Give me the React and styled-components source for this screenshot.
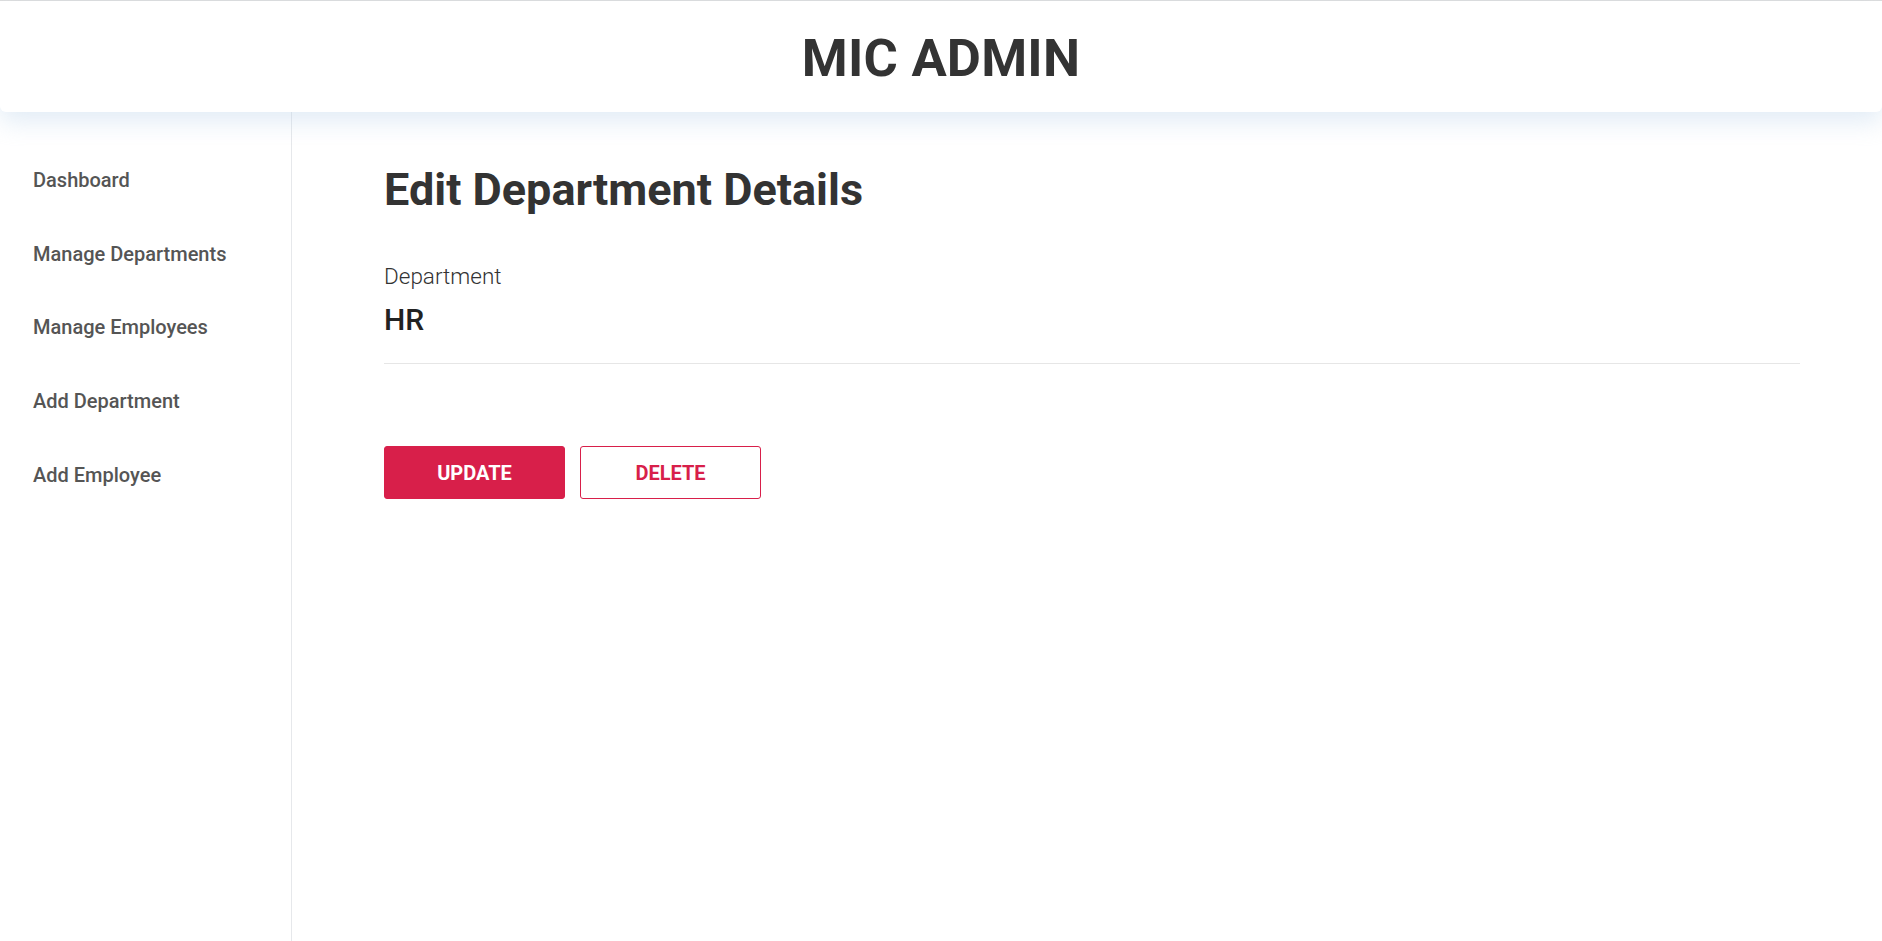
import React from "react";
import styled, { createGlobalStyle } from "styled-components";

const Global = createGlobalStyle`
  * { box-sizing: border-box; }
  html, body { margin: 0; padding: 0; background: #fff; }
  body { font-family: Roboto, "Noto Sans", Arial, sans-serif; color: #333; }
`;

const Page = styled.div`
  display: flex;
  flex-direction: column;
  min-height: 941px;
  border-top: 1px solid #dcdcdc;
`;

const Header = styled.header`
  position: relative;
  z-index: 2;
  height: 111px;
  padding-top: 3px;
  display: flex;
  align-items: center;
  justify-content: center;
  background: #fff;
  border-radius: 0 0 6px 6px;
  box-shadow: 0 10px 24px rgba(190, 212, 235, 0.45);
`;

const Title = styled.h1`
  margin: 0;
  font-size: 52.5px;
  font-weight: 700;
  color: #333;
  letter-spacing: 0.2px;
`;

const Body = styled.div`
  flex: 1;
  display: flex;
`;

const Sidebar = styled.nav`
  width: 292px;
  flex-shrink: 0;
  border-right: 1px solid #e6e8eb;
  padding-top: 31px;
  display: flex;
  flex-direction: column;
`;

const NavItem = styled.a`
  height: 73.8px;
  display: flex;
  align-items: center;
  padding-left: 33px;
  font-size: 20px;
  font-weight: 500;
  color: #555;
  text-decoration: none;
  cursor: pointer;
`;

const Main = styled.main`
  flex: 1;
  padding: 50px 82px 0 92px;
`;

const Heading = styled.h2`
  margin: 0;
  font-size: 45px;
  line-height: 55px;
  font-weight: 700;
  color: #333;
`;

const Field = styled.div`
  margin-top: 46px;
  padding-bottom: 25px;
  border-bottom: 1px solid #e6e6e6;
`;

const Label = styled.div`
  font-size: 22.5px;
  line-height: 1.2;
  font-weight: 300;
  color: #333;
`;

const Value = styled.div`
  margin-top: 12px;
  font-size: 30px;
  line-height: 1.2;
  font-weight: 500;
  color: #222;
`;

const Actions = styled.div`
  margin-top: 82px;
  display: flex;
  gap: 15px;
`;

const Button = styled.button`
  width: 181px;
  height: 53px;
  border-radius: 3px;
  font-family: Roboto, Arial, sans-serif;
  font-size: 20px;
  font-weight: 700;
  text-transform: uppercase;
  cursor: pointer;
  border: 1px solid #d81f4a;
  background: ${(p) => (p.$outline ? "#fff" : "#d81f4a")};
  color: ${(p) => (p.$outline ? "#d81f4a" : "#fff")};
`;

const links = [
  "Dashboard",
  "Manage Departments",
  "Manage Employees",
  "Add Department",
  "Add Employee",
];

export default function App() {
  return (
    <>
      <Global />
      <Page>
        <Header>
          <Title>MIC ADMIN</Title>
        </Header>
        <Body>
          <Sidebar>
            {links.map((l) => (
              <NavItem key={l}>{l}</NavItem>
            ))}
          </Sidebar>
          <Main>
            <Heading>Edit Department Details</Heading>
            <Field>
              <Label>Department</Label>
              <Value>HR</Value>
            </Field>
            <Actions>
              <Button>Update</Button>
              <Button $outline>Delete</Button>
            </Actions>
          </Main>
        </Body>
      </Page>
    </>
  );
}
